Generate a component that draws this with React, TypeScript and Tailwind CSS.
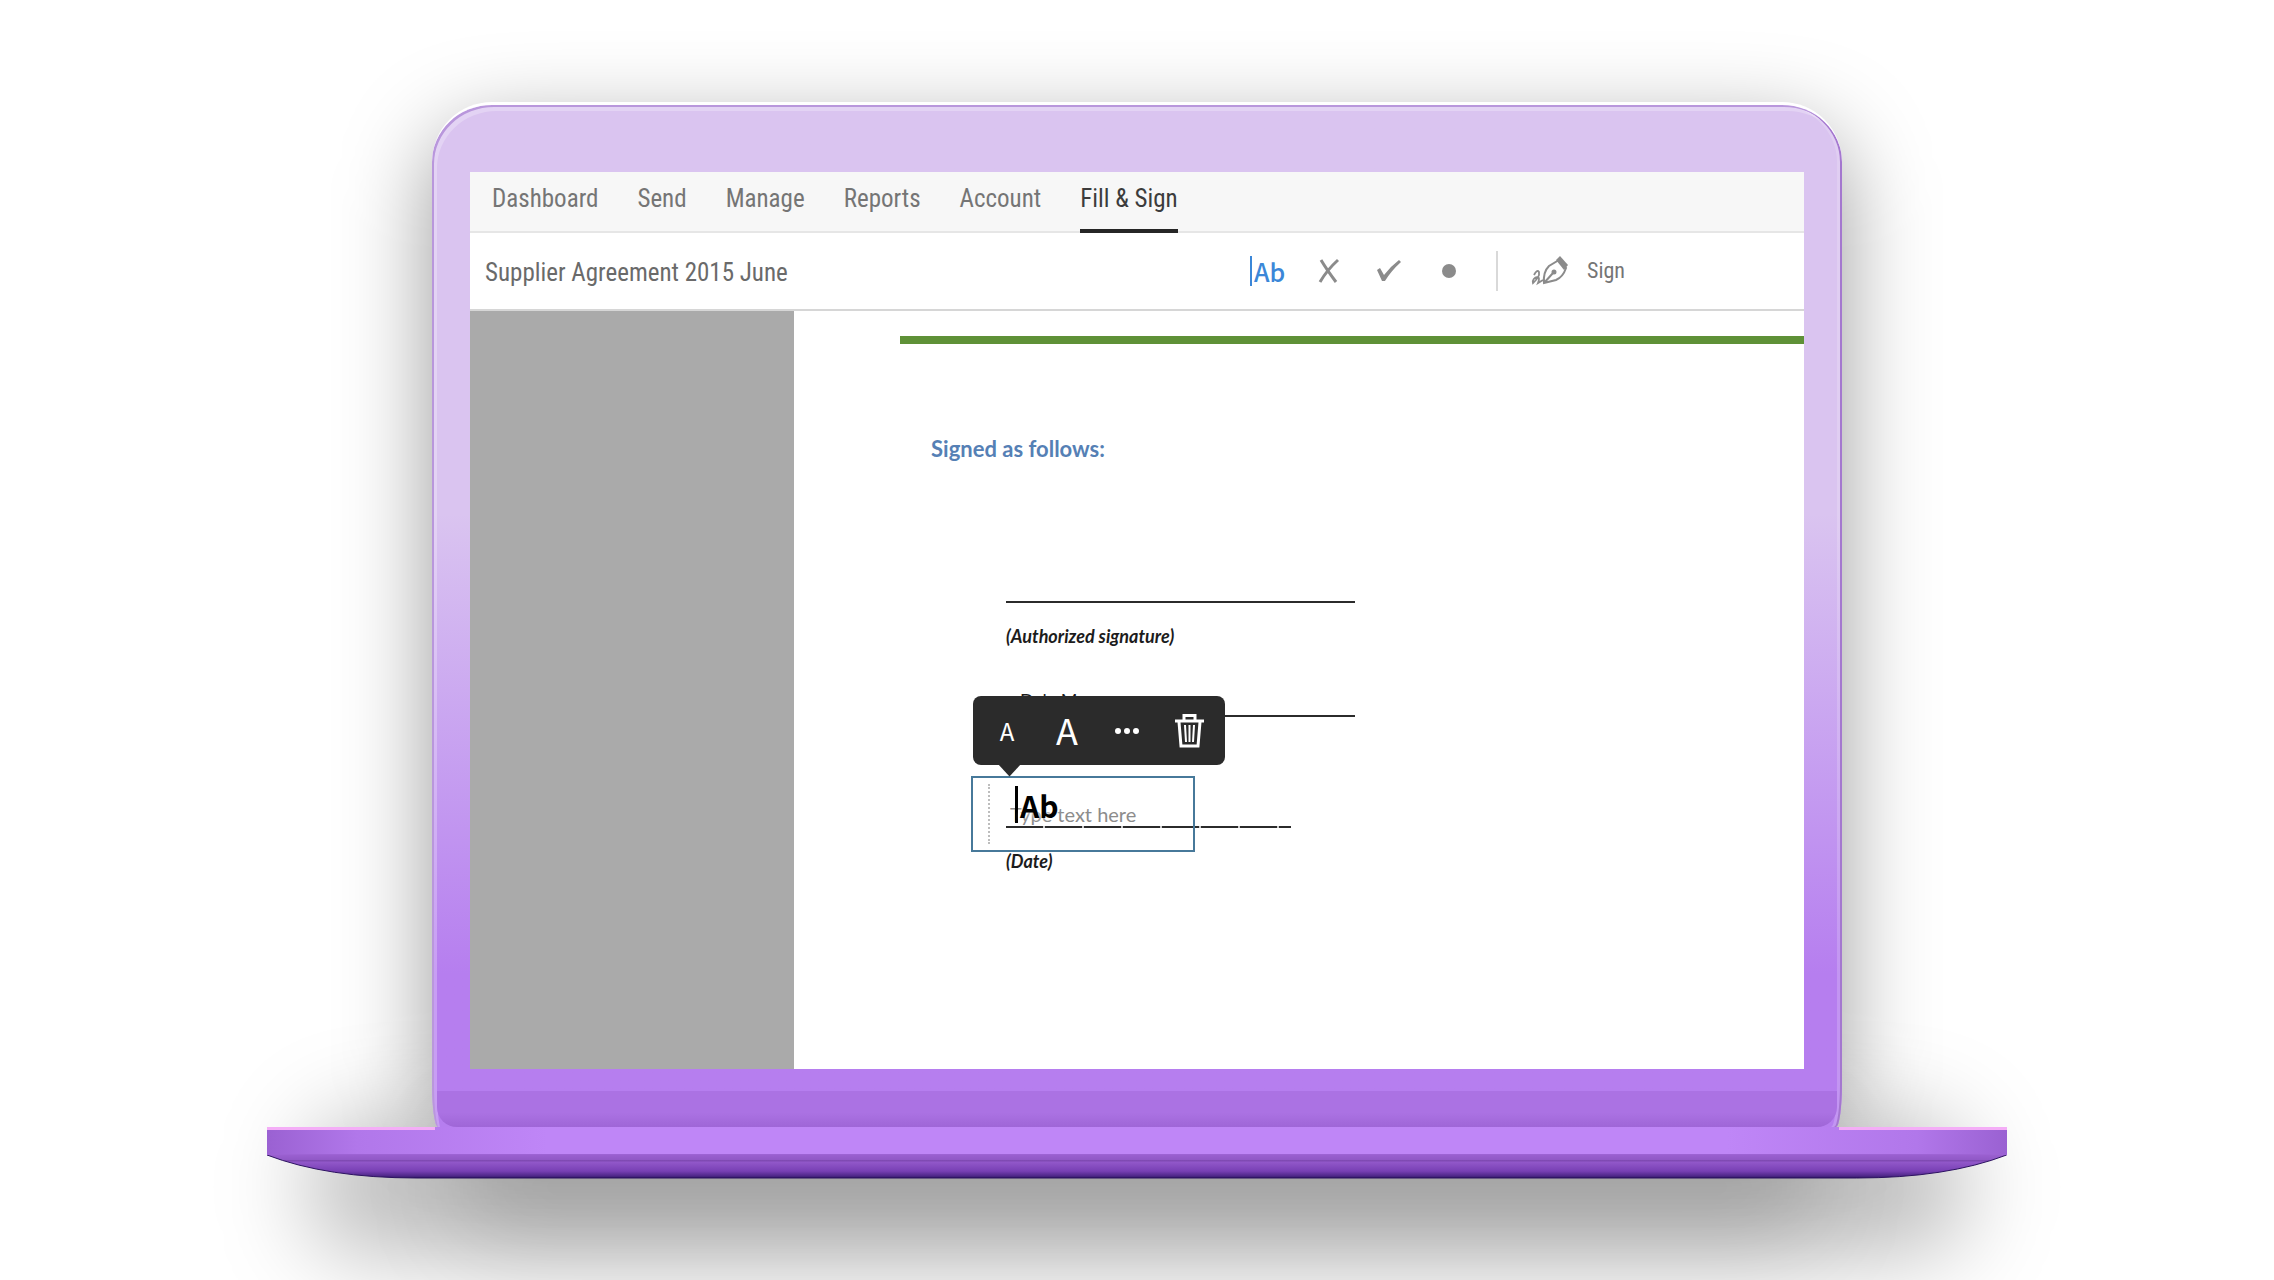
import type { ReactNode } from "react";

const NAV = ["Dashboard", "Send", "Manage", "Reports", "Account", "Fill & Sign"];

function NavBar() {
  return (
    <nav className="flex h-[61px] items-stretch gap-[39px] border-b-2 border-[#e6e6e6] bg-[#f7f7f7] pl-[22px] text-[25px] leading-[30px]">
      {NAV.map((item) => (
        <a
          key={item}
          href="#"
          className={
            item === "Fill & Sign"
              ? "-mb-[2px] border-b-4 border-[#262626] pt-3 text-[#3c3c3c]"
              : "pt-3 text-[#757575]"
          }
        >
          {item}
        </a>
      ))}
    </nav>
  );
}

function Tool({ label, children }: { label: string; children: ReactNode }) {
  return (
    <button type="button" aria-label={label} className="flex w-[34px] items-center justify-center">
      {children}
    </button>
  );
}

function ToolBar() {
  return (
    <div className="flex h-[78px] items-center border-b-2 border-[#d6d6d6] bg-white pl-[15px]">
      <h1 className="grow pt-1 text-[25px] leading-[30px] text-[#6a6a6a]">Supplier Agreement 2015 June</h1>
      <div className="flex h-10 w-[42%] shrink-0 items-center gap-[26px]">
        <button type="button" className="flex w-[36px] items-center gap-[2px] text-[#3b87d8]">
          <span className="h-[30px] w-[2px] shrink-0 bg-[#3b87d8]" />
          <span className="font-['Noto_Sans_CJK_SC',sans-serif] text-[25px] leading-[28px] font-medium">Ab</span>
        </button>
        <Tool label="Cross">
          <svg width="22" height="26" viewBox="0 0 22 26" fill="none" stroke="#8b8b8b" strokeWidth="3">
            <path d="M3 2 Q9 12 18 24M20 2 Q9 12 2 24" />
          </svg>
        </Tool>
        <Tool label="Check mark">
          <svg width="26" height="24" viewBox="0 0 26 24" fill="#8b8b8b">
            <path d="M1 11 L4 9 L8 16 Q15 7 23 1 L25 3 Q15 12 9 22 L6 22 Z" />
          </svg>
        </Tool>
        <Tool label="Dot">
          <span className="size-[14px] rounded-full bg-[#8b8b8b]" />
        </Tool>
        <span className="ml-1 h-10 w-[2px] bg-[#d9d9d9]" />
        <button type="button" className="flex items-center gap-[18px] pl-[7px] text-[22px] leading-[28px] text-[#757575]">
          <svg width="38" height="30" viewBox="0 0 38 30" fill="none" stroke="#8b8b8b" strokeWidth="2">
            <path d="M3 19 Q6 13 8 16 Q9 21 2 27 Q1 22 7 21 Q9 22 7 27 L12 24" strokeWidth="1.8" />
            <path d="M13 27 Q12 16 18 10 L28 4 L35 12 Q32 21 25 24 Z M13 27 L22 17" />
            <path d="M25 4 L29 0 L37 9 L33 14 Z" fill="#8b8b8b" stroke="none" />
            <circle cx="23" cy="16" r="1.5" fill="#8b8b8b" />
          </svg>
          Sign
        </button>
      </div>
    </div>
  );
}

function FormatMenu() {
  return (
    <div
      role="toolbar"
      aria-label="Text format"
      className="absolute -top-[82px] left-0 flex h-[69px] w-[252px] items-center rounded-lg bg-[#2b2b2b] font-['Noto_Sans_CJK_SC',sans-serif] text-white"
    >
      <button type="button" className="ml-[24px] w-[20px] text-[24px] leading-[30px]">A</button>
      <button type="button" className="ml-[36px] w-[28px] pb-1 text-[36px] leading-[40px]">A</button>
      <button type="button" aria-label="More" className="ml-[34px] flex gap-[3px]">
        <span className="size-[6px] rounded-full bg-white" />
        <span className="size-[6px] rounded-full bg-white" />
        <span className="size-[6px] rounded-full bg-white" />
      </button>
      <button type="button" aria-label="Delete" className="ml-[36px]">
        <svg width="29" height="34" viewBox="0 0 29 34" fill="none" stroke="#fff" strokeWidth="3">
          <path d="M0 7 H29 M9 6 V1.5 H20 V6 M4 8 L6 32 H23 L25 8" />
          <path d="M10 11 L11 28 M14.5 11 V28 M19 11 L18 28" strokeWidth="2" />
        </svg>
      </button>
      <svg className="absolute top-[68px] left-[25px]" width="23" height="13" viewBox="0 0 23 13" fill="#2b2b2b">
        <path d="M0 0 H23 L11.5 12.5 Z" />
      </svg>
    </div>
  );
}

function TextField() {
  return (
    <div className="absolute -top-[50px] -left-[35px] h-[76px] w-[224px] border-2 border-[#47799a]">
      <FormatMenu />
      <span className="absolute top-[6px] left-[15px] h-[60px] border-l-2 border-dotted border-[#bdbdbd]" />
      <label className="sr-only" htmlFor="field">Text</label>
      <input
        id="field"
        placeholder="Type text here"
        className="h-full w-full bg-transparent pl-[37px] font-[Lato,sans-serif] text-[20px] leading-[30px] outline-none placeholder:text-[#8c8c8c]"
      />
      <span className="absolute top-[8px] left-[42px] flex items-center gap-[2px] text-black">
        <span className="h-[37px] w-[3px] bg-black" />
        <span className="font-['Noto_Sans_CJK_SC',sans-serif] text-[30px] leading-[36px] font-bold [text-shadow:0_0_4px_#fff]">
          Ab
        </span>
      </span>
    </div>
  );
}

function Document() {
  return (
    <div className="flex grow bg-white">
      <aside className="w-[324px] shrink-0 bg-[#aaaaaa]" />
      <main className="grow pt-[25px] pl-[106px] font-[Lato,sans-serif]">
        <div className="h-2 bg-[#5f9137]" />
        <div className="pl-[31px]">
          <h2 className="mt-[90px] text-[22px] leading-[30px] font-bold text-[#5580b5]">Signed as follows:</h2>
          <div className="pl-[75px] text-[18px] leading-[24px] font-bold text-[#1c1c1c] italic">
            <div className="mt-[137px] w-[349px] border-b-2 border-[#2b2b2b]" />
            <p className="mt-[21px]">(Authorized signature)</p>
            <div className="mt-[40px] h-[29px] w-[349px] border-b-2 border-[#2b2b2b] pl-[14px] text-[18px] leading-[24px] font-normal not-italic">
              Dale Mars
            </div>
            <div className="relative mt-[109px] h-[2px] w-[285px] bg-[repeating-linear-gradient(90deg,#2b2b2b_0_37px,#cccccc_37px_39px)] font-normal not-italic">
              <TextField />
            </div>
            <p className="mt-[21px]">(Date)</p>
          </div>
        </div>
      </main>
    </div>
  );
}

function Base() {
  return (
    <div className="relative w-[76.5%]">
      <div className="relative h-7 border-b border-[#9d63d4] bg-[linear-gradient(90deg,#9a61d2_0,#b177ea_90px,#bf86f7_280px,#bf86f7_calc(100%-280px),#b177ea_calc(100%-90px),#9a61d2_100%)]">
        <div className="absolute top-0 left-0 h-[3px] w-[168px] bg-[#f4adf7]" />
        <div className="absolute top-0 right-0 h-[3px] w-[168px] bg-[#f4adf7]" />
      </div>
      <svg className="block w-full" height="24" viewBox="0 0 1740 24" preserveAspectRatio="none">
        <defs>
          <linearGradient id="under" x1="0" y1="0" x2="0" y2="1">
            <stop offset="0" stopColor="#9a60d0" />
            <stop offset="0.22" stopColor="#9058c6" />
            <stop offset="0.25" stopColor="#7643a8" />
            <stop offset="0.3" stopColor="#9258ca" />
            <stop offset="0.7" stopColor="#7840b4" />
            <stop offset="0.92" stopColor="#4c2686" />
            <stop offset="1" stopColor="#2c1260" />
          </linearGradient>
        </defs>
        <path d="M0 0 H1740 Q1680 23 1590 23 H150 Q60 23 0 0 Z" fill="url(#under)" />
        <path d="M0 0 Q60 23 150 23 H1590 Q1680 23 1740 0" fill="none" stroke="#2c1260" strokeWidth="1" />
      </svg>
    </div>
  );
}

export default function App() {
  return (
    <div className="isolate flex min-h-screen flex-col items-center overflow-hidden bg-white pt-[102px] font-['Roboto_Condensed','Open_Sans',sans-serif]">
      <div className="relative flex w-[62%] flex-col">
        <div className="absolute inset-x-0 top-[30px] bottom-0 -z-10 rounded-[60px] bg-black/40 blur-[45px]" />
        <div className="absolute inset-x-[20px] -bottom-[115px] -z-10 h-[110px] rounded-[60px] bg-black/15 blur-[45px]" />
        <div className="absolute -inset-x-[125px] -bottom-[130px] -z-10 h-[140px] rounded-[60px] bg-black/25 blur-[45px]" />
        <div className="overflow-hidden border-t-[3px] border-white bg-linear-to-b from-[#dac4f0] from-40% to-[#b67eef] to-85% [border-radius:60px_60px_6px_6px/60px_60px_44px_44px] shadow-[inset_2px_2px_0_#b997dc,inset_-2px_0_0_#a477cf,inset_5px_6px_0_rgba(255,255,255,0.25),inset_-5px_0_0_rgba(255,255,255,0.18)]">
          <div className="flex min-h-[964px] flex-col px-[38px] pt-[67px]">
            <div className="flex grow flex-col bg-white">
              <NavBar />
              <ToolBar />
              <Document />
            </div>
          </div>
          <div className="mx-[5px] mt-[22px] h-[36px] rounded-b-[20px] bg-linear-to-b from-[#ab72e3] from-60% to-[#9f66d7]" />
        </div>
      </div>
      <Base />
    </div>
  );
}
